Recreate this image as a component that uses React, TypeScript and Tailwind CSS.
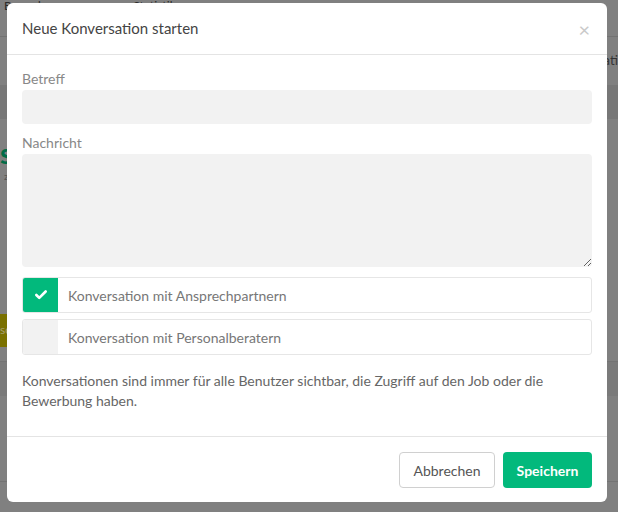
import { Check } from "lucide-react";

const font = { fontFamily: "Lato, 'Open Sans', sans-serif" };

function BackdropPage() {
  return (
    <div className="flex h-[512px] w-full flex-col bg-[#808080] text-[#2a2a2a]">
      <div className="flex h-[37px] gap-10 border-b border-[#727272] px-1 text-[12px] leading-[12px]">
        <span>Bewerbungen</span>
        <span className="ml-4">Statistik</span>
      </div>
      <div className="flex h-[48px] items-center justify-end text-[13px] text-[#333]">
        <span>Stati</span>
      </div>
      <div className="h-[34px] bg-[#777]" />
      <div className="flex h-[180px] flex-col pt-[18px]">
        <span className="text-[28px] font-bold leading-[32px] text-[#006b47]">s</span>
        <span className="pl-1 text-[10px] text-[#555]">z</span>
      </div>
      <div className="flex h-[62px] items-center">
        <div className="flex h-[33px] w-[24px] items-center bg-[#7a7100] text-[12px] text-[#a8a070]">
          sc
        </div>
      </div>
      <div className="h-[35px] border-t border-[#737373] bg-[#7a7a7a]" />
      <div className="h-[86px] border-b border-[#737373]" />
    </div>
  );
}

function CheckRow({ label, checked }: { label: string; checked: boolean }) {
  return (
    <div className="flex h-[36px] items-stretch overflow-hidden rounded-[3px] border border-[#e6e6e6] bg-white">
      <div
        className={
          checked
            ? "flex w-[35px] items-center justify-center bg-[#02b97c]"
            : "w-[35px] bg-[#f2f2f2]"
        }
      >
        {checked && <Check className="h-[14px] w-[14px] text-white" strokeWidth={4.5} />}
      </div>
      <div className="flex items-center pl-[10px] text-[14px] text-[#777]">{label}</div>
    </div>
  );
}

export default function App() {
  return (
    <div className="relative h-[512px] w-[618px] overflow-hidden" style={font}>
      <BackdropPage />
      <div className="absolute left-[7px] top-[3px] flex h-[499px] w-[600px] flex-col rounded-[6px] bg-white">
        <div className="flex h-[52px] items-center justify-between border-b border-[#e4e4e4] pl-[15px] pr-[17px]">
          <h4 className="text-[15px] text-[#444]">Neue Konversation starten</h4>
          <span className="text-[20px] leading-none text-[#c9c9c9]">×</span>
        </div>

        <div className="flex flex-col px-[15px] pt-[15px]">
          <label className="mb-[2px] text-[14px] leading-[18px] text-[#888]">Betreff</label>
          <input className="h-[34px] w-full rounded-[4px] bg-[#f2f2f2] outline-none" />

          <label className="mb-[2px] mt-[10px] text-[14px] leading-[18px] text-[#888]">
            Nachricht
          </label>
          <textarea className="block h-[113px] w-full resize-y rounded-[4px] bg-[#f2f2f2] outline-none" />

          <div className="mt-[10px] flex flex-col gap-[6px]">
            <CheckRow label="Konversation mit Ansprechpartnern" checked />
            <CheckRow label="Konversation mit Personalberatern" checked={false} />
          </div>

          <p className="mt-[16px] text-[14px] leading-[20px] text-[#666]">
            Konversationen sind immer für alle Benutzer sichtbar, die Zugriff auf den Job oder die
            Bewerbung haben.
          </p>
        </div>

        <div className="mt-auto flex justify-end gap-[8px] border-t border-[#e4e4e4] px-[15px] pb-[14px] pt-[15px]">
          <button className="h-[36px] w-[96px] rounded-[4px] border border-[#d0d0d0] bg-white text-[14px] text-[#555]">
            Abbrechen
          </button>
          <button className="h-[36px] w-[89px] rounded-[4px] bg-[#02b97c] text-[14px] font-bold text-white">
            Speichern
          </button>
        </div>
      </div>
    </div>
  );
}
